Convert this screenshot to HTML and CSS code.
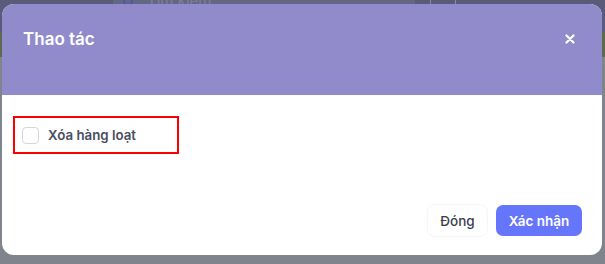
FILE: index.html
```html
<!DOCTYPE html>
<html lang="vi">
<head>
<meta charset="utf-8">
<link rel="stylesheet" href="styles.css">
</head>
<body>
<div class="backdrop">
  <div class="topbar">
    <div class="search"><span class="search-icon"></span><span class="search-text">Tìm kiếm</span></div>
    <div class="plus"></div>
  </div>
  <div class="greenband"></div>
  <div class="rest"></div>
</div>
<div class="modal">
  <div class="modal-header">
    <h2 class="modal-title">Thao tác</h2>
    <button class="close" aria-label="close">
      <svg width="10" height="10" viewBox="0 0 10 10"><path d="M1.5 1.5 L8.5 8.5 M8.5 1.5 L1.5 8.5" stroke="#fff" stroke-width="2.2" stroke-linecap="round"/></svg>
    </button>
  </div>
  <div class="modal-body">
    <label class="option">
      <span class="checkbox"></span>
      <span class="option-text">Xóa hàng loạt</span>
    </label>
  </div>
  <div class="modal-footer">
    <button class="btn btn-light">Đóng</button>
    <button class="btn btn-primary">Xác nhận</button>
  </div>
</div>
</body>
</html>
```

FILE: styles.css
```css
* { box-sizing: border-box; }
html, body { margin: 0; padding: 0; }
body {
  width: 605px;
  height: 264px;
  overflow: hidden;
  position: relative;
  font-family: Inter, "Noto Sans", "Liberation Sans", sans-serif;
  background: #7f848d;
}
.backdrop {
  display: flex;
  flex-direction: column;
  height: 264px;
}
.topbar {
  height: 32px;
  background: #5a5b7b;
  display: flex;
  align-items: flex-start;
  padding-left: 113px;
  gap: 15px;
}
.search {
  width: 302px;
  height: 30px;
  margin-top: -14px;
  background: #646686;
  border-radius: 4px;
  display: flex;
  align-items: center;
  padding-left: 10px;
  gap: 14px;
}
.search-icon {
  width: 10px; height: 10px;
  border: 2px solid #4b5aa0;
  border-radius: 50%;
}
.search-text { color: #7d7f9a; font-size: 15px; line-height: 18px; }
.plus {
  width: 26px; height: 28px;
  margin-top: -14px;
  border: 1px solid #8a8ca4;
  border-radius: 3px;
}
.greenband { height: 25px; background: #5d6a4f; }
.rest { flex: 1; background: #7f848d; }

.modal {
  position: absolute;
  left: 2px;
  top: 4px;
  width: 600px;
  height: 251px;
  background: #fff;
  border-radius: 12px;
  overflow: hidden;
  display: flex;
  flex-direction: column;
}
.modal-header {
  height: 91px;
  background: #918bcb;
  display: flex;
  justify-content: space-between;
  align-items: flex-start;
  padding: 24px 27px 0 21px;
}
.modal-title {
  margin: 0;
  color: #fff;
  font-size: 17px;
  font-weight: 600;
  line-height: 22px;
}
.close {
  background: none;
  border: 0;
  padding: 0;
  margin-top: 6px;
  width: 10px;
  height: 10px;
  display: flex;
}
.modal-body {
  flex: 1;
  padding: 21px 0 0 11px;
}
.option {
  width: 166px;
  height: 38px;
  border: 2px solid #f00;
  display: flex;
  align-items: center;
  padding-left: 7px;
  gap: 9px;
}
.checkbox {
  width: 17px;
  height: 17px;
  border: 1px solid #d5d6de;
  border-radius: 4px;
  background: #fff;
}
.option-text {
  font-size: 13.3px;
  font-weight: 600;
  color: #4a4e5e;
}
.modal-footer {
  display: flex;
  justify-content: flex-end;
  gap: 9px;
  padding: 0 20px 19px 0;
}
.btn {
  font-family: inherit;
  font-size: 13.5px;
  font-weight: 600;
  height: 31px;
  border-radius: 7px;
  border: 0;
  padding: 0;
  white-space: nowrap;
  display: flex;
  align-items: center;
  justify-content: center;
}
.btn-light {
  background: #fff;
  color: #3a3d4a;
  font-weight: 500;
  box-shadow: 0 0 0 1px #f6f6f8;
  width: 59px;
}
.btn-primary {
  background: #6576fc;
  color: #fff;
  width: 86px;
}
```
